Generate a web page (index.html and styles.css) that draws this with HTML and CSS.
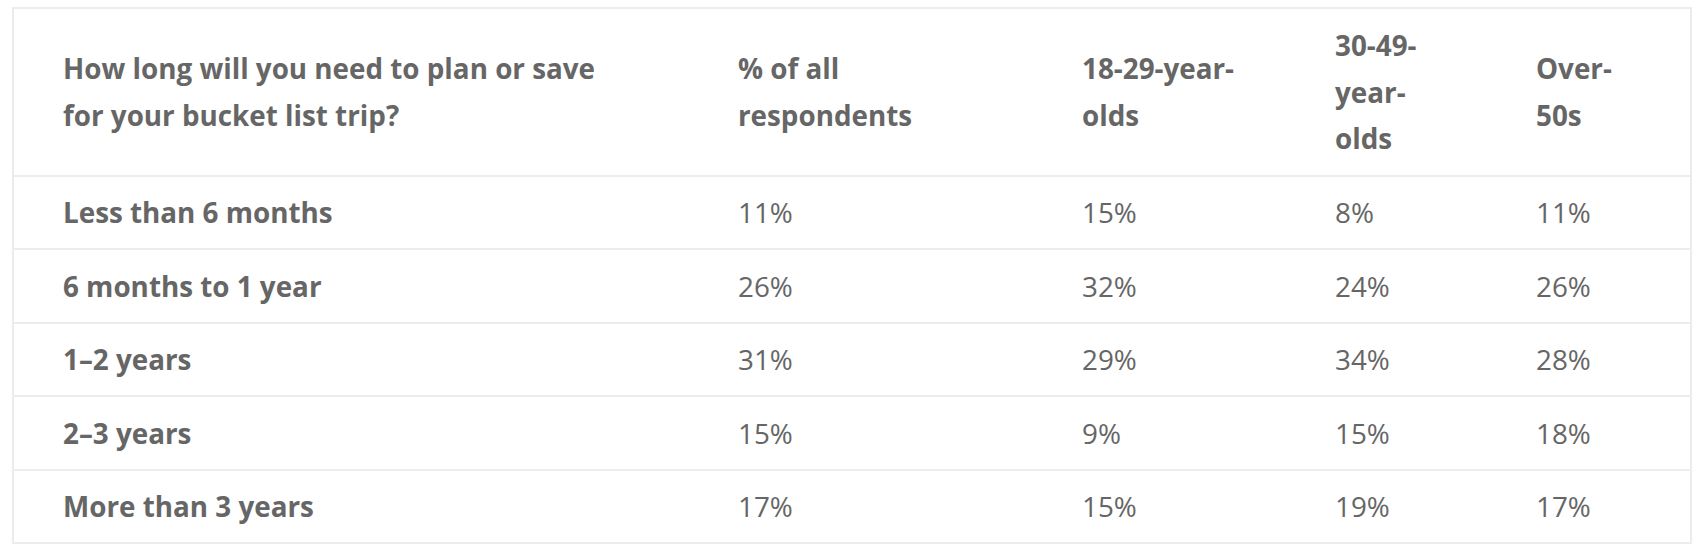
FILE: index.html
```html
<!DOCTYPE html>
<html lang="en">
<head>
<meta charset="utf-8">
<title>Bucket list trip planning</title>
<link rel="stylesheet" href="styles.css">
</head>
<body>
<table class="survey">
  <colgroup>
    <col class="c1">
    <col class="c2">
    <col class="c3">
    <col class="c4">
    <col class="c5">
  </colgroup>
  <thead>
    <tr>
      <th class="h1">How long will you need to plan or save for your bucket list trip?</th>
      <th class="h2">% of all respondents</th>
      <th class="h3">18-29-year-olds</th>
      <th class="h4">30-49-year-olds</th>
      <th class="h5">Over-50s</th>
    </tr>
  </thead>
  <tbody>
    <tr><th class="label">Less than 6 months</th><td>11%</td><td>15%</td><td>8%</td><td>11%</td></tr>
    <tr><th class="label">6 months to 1 year</th><td>26%</td><td>32%</td><td>24%</td><td>26%</td></tr>
    <tr><th class="label">1–2 years</th><td>31%</td><td>29%</td><td>34%</td><td>28%</td></tr>
    <tr><th class="label">2–3 years</th><td>15%</td><td>9%</td><td>15%</td><td>18%</td></tr>
    <tr><th class="label">More than 3 years</th><td>17%</td><td>15%</td><td>19%</td><td>17%</td></tr>
  </tbody>
</table>
</body>
</html>
```
FILE: styles.css
```css
html, body {
  margin: 0;
  padding: 0;
  background: #ffffff;
}

body {
  font-family: "Open Sans", "Liberation Sans", sans-serif;
  color: #666666;
}

.survey {
  margin: 7px 0 0 12px;
  width: 1680px;
  table-layout: fixed;
  border-collapse: collapse;
  border: 2px solid #ececec;
  font-size: 27.8px;
  line-height: 46.5px;
}

.c1 { width: 676px; }
.c2 { width: 344px; }
.c3 { width: 253px; }
.c4 { width: 201px; }
.c5 { width: auto; }

.survey th,
.survey td {
  text-align: left;
  vertical-align: middle;
  padding: 12.5px 20px 12.5px 49px;
  white-space: nowrap;
}

.survey thead th {
  font-weight: 700;
  padding-top: 13px;
  padding-bottom: 13px;
  white-space: normal;
}

.survey .h1 { padding-right: 70px; }
.survey .h2 { padding-right: 85px; }
.survey .h3 { padding-right: 22px; }
.survey .h4 { padding-right: 42px; }
.survey .h5 { padding-right: 58px; }

.survey tbody tr {
  border-top: 2px solid #ececec;
}

.survey .label {
  font-weight: 700;
}

.survey td {
  font-weight: 400;
}
```
